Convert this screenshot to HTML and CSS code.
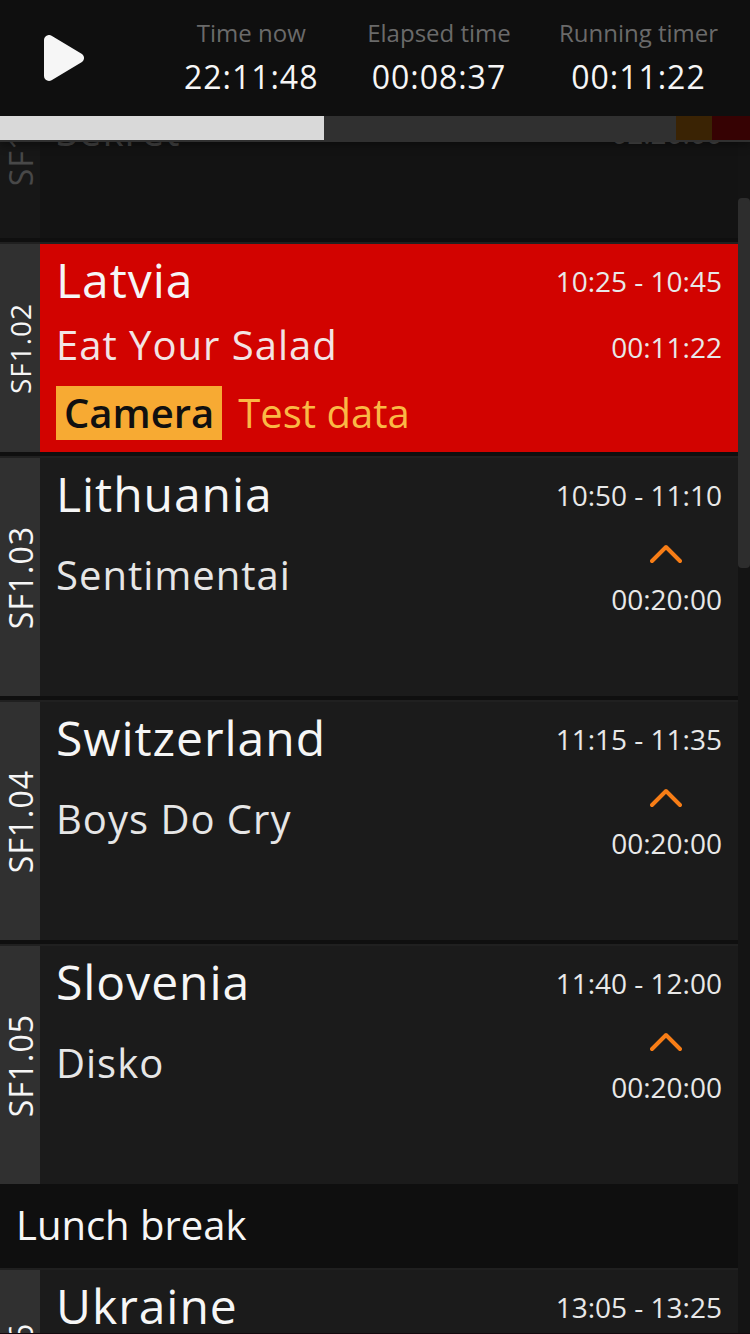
FILE: index.html
```html
<!DOCTYPE html>
<html lang="en">
<head>
<meta charset="utf-8">
<title>Running order</title>
<link rel="stylesheet" href="styles.css">
</head>
<body>
<div class="app">
  <header class="header">
    <div class="status">
      <svg class="play" viewBox="0 0 40 46" width="40" height="46"><path d="M5 5V41L35 23Z" fill="#f6f6f6" stroke="#f6f6f6" stroke-width="10" stroke-linejoin="round"/></svg>
      <div class="clock"><span class="clock-label">Time now</span><span class="clock-value">22:11:48</span></div>
      <div class="clock"><span class="clock-label">Elapsed time</span><span class="clock-value">00:08:37</span></div>
      <div class="clock"><span class="clock-label">Running timer</span><span class="clock-value">00:11:22</span></div>
    </div>
    <div class="progress"><div class="elapsed"></div><div class="remaining"></div><div class="warning"></div><div class="danger"></div></div>
  </header>
  <main class="list">
    <div class="items">
      <article class="item compact past">
        <div class="cue"><span>SF1.01</span></div>
        <div class="body"><h2></h2><time></time><p>Sekret</p><div class="duration">02:20:00</div></div>
      </article>
      <article class="item compact live">
        <div class="cue small"><span>SF1.02</span></div>
        <div class="body"><h2>Latvia</h2><time>10:25 - 10:45</time><p>Eat Your Salad</p><div class="duration">00:11:22</div>
          <div class="note"><span class="tag">Camera</span><span class="note-text">Test data</span></div></div>
      </article>
      <article class="item">
        <div class="cue"><span>SF1.03</span></div>
        <div class="body"><h2>Lithuania</h2><time>10:50 - 11:10</time><p>Sentimentai</p><div class="duration"><svg class="chevron" viewBox="0 0 32 48" width="32" height="48"><path d="M2 29L16 15L30 29"/></svg><span>00:20:00</span></div></div>
      </article>
      <article class="item">
        <div class="cue"><span>SF1.04</span></div>
        <div class="body"><h2>Switzerland</h2><time>11:15 - 11:35</time><p>Boys Do Cry</p><div class="duration"><svg class="chevron" viewBox="0 0 32 48" width="32" height="48"><path d="M2 29L16 15L30 29"/></svg><span>00:20:00</span></div></div>
      </article>
      <article class="item last">
        <div class="cue"><span>SF1.05</span></div>
        <div class="body"><h2>Slovenia</h2><time>11:40 - 12:00</time><p>Disko</p><div class="duration"><svg class="chevron" viewBox="0 0 32 48" width="32" height="48"><path d="M2 29L16 15L30 29"/></svg><span>00:20:00</span></div></div>
      </article>
      <div class="block">Lunch break</div>
      <article class="item compact">
        <div class="cue"><span>SF1.06</span></div>
        <div class="body"><h2>Ukraine</h2><time>13:05 - 13:25</time></div>
      </article>
    </div>
    <div class="scrollbar"><div class="thumb"></div></div>
  </main>
</div>
</body>
</html>
```
FILE: styles.css
```css
* { box-sizing: border-box; }
body { margin: 0; background: #0f0f0f; color: #f6f6f6; font-family: "Open Sans", sans-serif; }
.app { width: 750px; height: 1334px; display: flex; flex-direction: column; overflow: hidden; border-bottom: 1px solid #14090e; }

.header { flex: none; position: relative; z-index: 1; background: #0f0f0f; border-bottom: 2px solid #303030; box-shadow: 0 4px 8px rgba(0, 0, 0, 0.35); }
.status { height: 116px; display: grid; grid-template-columns: 157.5px 187.5px 188px 211px; }
.play { margin: 35px 0 0 44px; }
.clock { display: flex; flex-direction: column; align-items: center; padding-top: 16px; }
.clock-label { font-size: 24px; line-height: 33px; color: #6a6a6a; }
.clock-value { font-size: 32px; line-height: 56px; letter-spacing: 0.96px; }
.progress { height: 24px; display: flex; }
.elapsed { width: 324px; background: #d9d9d9; }
.remaining { flex: 1; background: #303030; }
.warning { width: 36px; background: #3a2304; }
.danger { width: 38px; background: #360203; }

.list { flex: 1; min-height: 0; display: flex; overflow: hidden; }
.items { flex: 1; margin-top: -114px; }
.item { display: flex; height: 240px; margin-bottom: 4px; border-top: 2px solid #202020; background: #1b1b1b; }
.item.compact { height: 210px; }
.item.last { margin-bottom: 0; }
.item.past { background: #131313; border-color: #131313; }
.cue { width: 40px; flex: none; display: flex; align-items: center; justify-content: center; background: #303030; font-size: 32px; }
.cue span { writing-mode: vertical-rl; transform: rotate(180deg); line-height: 40px; margin: 1px 0 0 1px; letter-spacing: 0.96px; }
.cue.small { font-size: 28px; }
.cue.small span { margin-left: 0; }
.body { flex: 1; display: grid; grid-template-columns: 1fr auto; grid-template-rows: 73px 87px; align-content: start; align-items: center; padding: 0 16px; }
.compact .body { grid-template-rows: 73px 55px 54px; }
.body h2 { margin: 0; font-size: 48px; font-weight: 400; line-height: 71px; padding-bottom: 2px; letter-spacing: 0.96px; }
.body p { margin: 0; font-size: 40px; line-height: 55px; letter-spacing: 1px; opacity: 0.93; }
.body time, .duration { font-size: 28px; line-height: 38px; color: #e8e8e8; }
.duration { display: flex; flex-direction: column; align-items: flex-end; }
.compact .duration { padding-top: 4px; }
.chevron { margin-right: 40px; fill: none; stroke: #f77d16; stroke-width: 4; stroke-linecap: round; stroke-linejoin: round; }
.live .body { background: #d20300; }
.past .cue { background: #171717; color: #484848; }
.past .body p, .past .duration { color: #484848; }
.note { grid-column: 1 / 3; display: flex; gap: 16px; margin-top: 14px; font-size: 40px; line-height: 54px; }
.compact .note { align-self: start; }
.tag { padding: 0 8px; background: #f7aa33; color: #101010; font-weight: 600; }
.note-text { color: #fab845; }
.block { height: 84px; padding: 0 16px; background: #0f0f0f; font-size: 40px; line-height: 82px; }

.scrollbar { width: 12px; flex: none; background: #141414; padding-top: 56px; }
.thumb { height: 370px; border-radius: 4px; background: #2d2d2d; }
```
